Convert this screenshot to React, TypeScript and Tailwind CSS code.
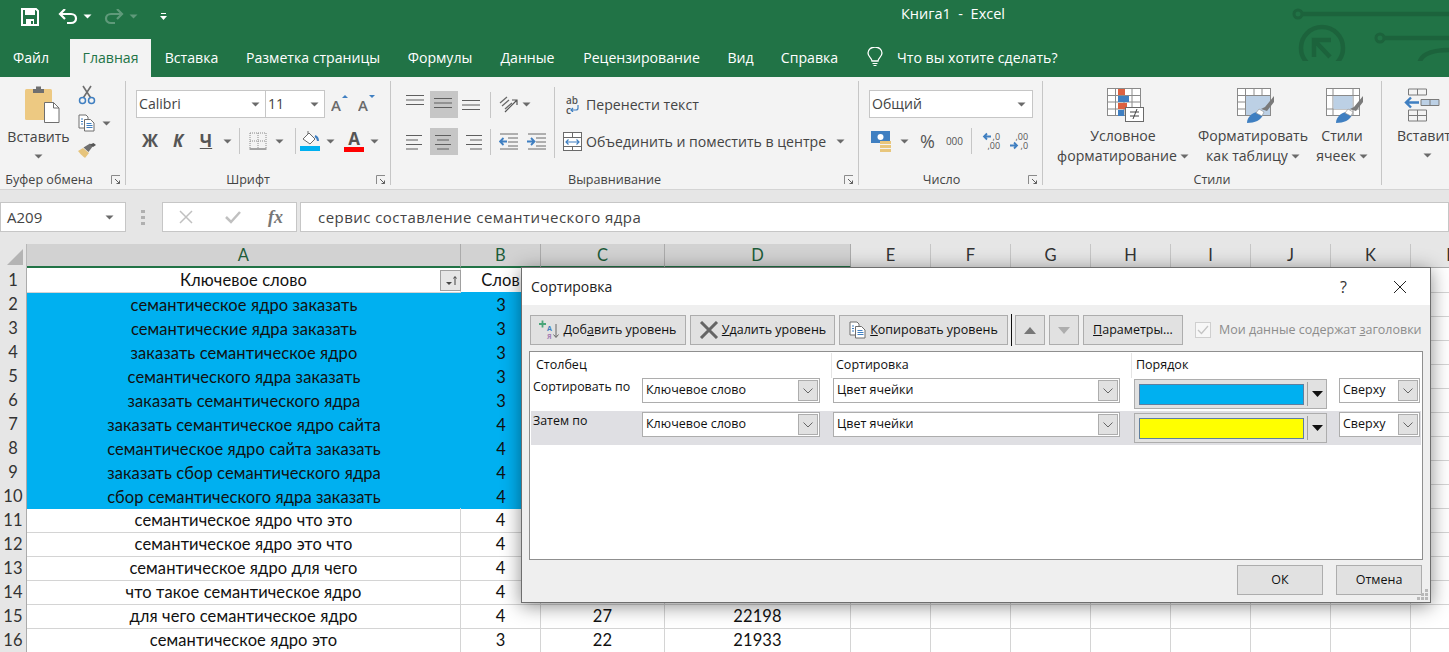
import type { ReactNode } from "react";

const Caret = ({ color = "#6a6a6a" }: { color?: string }) => (
  <svg width="9" height="5" viewBox="0 0 9 5" className="shrink-0">
    <path d="M0.5 0.5h8L4.5 4.5z" fill={color} />
  </svg>
);

const Launcher = () => (
  <svg width="10" height="10" viewBox="0 0 10 10" fill="none">
    <path d="M0.5 9V0.5H9" stroke="#8a8a8a" />
    <path d="M4 4l4.5 4.5M8.5 5.5v3h-3" stroke="#5f5f5f" />
  </svg>
);

const Group = ({
  label,
  launcher,
  className,
  labelClass,
  children,
}: {
  label: string;
  launcher?: boolean;
  className: string;
  labelClass?: string;
  children: ReactNode;
}) => (
  <div className={`h-[104px] shrink-0 flex flex-col border-r border-r-[#c6c6c6] ${className}`}>
    <div className="h-[91px] shrink-0">{children}</div>
    <div className={`relative h-[16px] shrink-0 text-center text-[12.6px] leading-[16px] text-[#444] ${labelClass ?? ""}`}>
      {label}
      {launcher && (
        <span className="absolute right-[4px] top-[3px]">
          <Launcher />
        </span>
      )}
    </div>
  </div>
);

const Lines = ({ rows }: { rows: [number, number][] }) => (
  <svg width="20" height="20" viewBox="0 0 20 20">
    {rows.map(([x, w], i) => (
      <rect key={i} x={x} y={3 + i * 4.5} width={w} height="1" fill="#5f5f5f" />
    ))}
  </svg>
);

const Vsep = () => <div className="w-px h-[26px] bg-[#c6c6c6] shrink-0" />;

const Scissors = () => (
  <svg width="18" height="20" viewBox="0 0 18 20" fill="none">
    <path d="M5.5 12.5L13 1M12.5 12.5L5 1" stroke="#6e6e6e" strokeWidth="1.6" />
    <circle cx="4.5" cy="15.5" r="3" stroke="#3f7fc1" strokeWidth="1.5" />
    <circle cx="13.5" cy="15.5" r="3" stroke="#3f7fc1" strokeWidth="1.5" />
  </svg>
);

const CopyIcon = ({ size = 18 }: { size?: number }) => (
  <svg width={size} height={size} viewBox="0 0 18 18" fill="none">
    <path d="M1 1h7l2 2v11H1z" fill="#fff" stroke="#6e6e6e" />
    <path d="M6.5 5.5h6l3.5 3.5v8H6.5z" fill="#fff" stroke="#6e6e6e" />
    <path d="M8.5 9.5h5M8.5 11.5h6M8.5 13.5h6M3 5h2M3 7.5h2M3 10h2" stroke="#3f7fc1" />
  </svg>
);

const Brush = () => (
  <svg width="18" height="16" viewBox="0 0 18 16">
    <path d="M0 8l5-3 6 5-4 5C5 13 3 12 0 8z" fill="#e6c47c" />
    <path d="M5.5 4.5L12 0.5l3 2.5-4.5 6z" fill="#6f6f6f" />
    <path d="M12 1.5L15.5 0 18 2l-3 2z" fill="#555" />
  </svg>
);

const Paste = () => (
  <svg width="35" height="38" viewBox="0 0 35 38">
    <rect x="0" y="4" width="27" height="31" rx="1.5" fill="#edc982" />
    <path d="M8 4h3V1.5h5V4h3v4H8z" fill="#6f6f6f" />
    <path d="M19.5 17.5h9l5.5 5.5v14.5H19.5z" fill="#fff" stroke="#6f6f6f" />
    <path d="M28.5 17.5V23H34" fill="none" stroke="#6f6f6f" />
  </svg>
);

const GrowFont = ({ up }: { up: boolean }) => (
  <svg width="20" height="20" viewBox="0 0 20 20">
    <text x="0" y="17" fontSize="15" fontWeight="600" fill="#6a6a6a" fontFamily="Open Sans">
      A
    </text>
    <path d={up ? "M11 4l3-3 3 3z" : "M11 1h6l-3 3z"} fill="#3f7fc1" />
  </svg>
);

const BordersIcon = () => (
  <svg width="18" height="18" viewBox="0 0 18 18" fill="none">
    <path d="M1 1h16M1 1v16M17 1v16M9 1v16M1 9h16" stroke="#8a8a8a" strokeDasharray="1 1" />
    <path d="M0.5 17h17" stroke="#555" />
  </svg>
);

const FillIcon = () => (
  <svg width="20" height="20" viewBox="0 0 20 20" fill="none">
    <path d="M3 8l6-6 6 6-5 5z" fill="#fff" stroke="#6a6a6a" />
    <path d="M8 3V0" stroke="#6a6a6a" />
    <path d="M15 5c2 1 3 3 3 5" stroke="#3f7fc1" strokeWidth="2" />
    <rect x="0" y="15" width="20" height="5" fill="#00b0f0" />
  </svg>
);

const WrapIcon = () => (
  <svg width="17" height="17" viewBox="0 0 17 17" fill="none">
    <path d="M15 10v3c0 1.500-1 2-2 2H8M10 13l-2 2 2 2" stroke="#3f7fc1" strokeWidth="1.2" />
  </svg>
);

const MergeIcon = () => (
  <svg width="20" height="20" viewBox="0 0 20 20" fill="none">
    <rect x="0.5" y="0.5" width="18" height="18" fill="#fff" stroke="#6a6a6a" />
    <path d="M0.5 5.5h18M0.5 14.5h18M9.5 0.5v5M9.5 14.5v4" stroke="#6a6a6a" />
    <path d="M3 10h13M5.5 7.5L3 10l2.5 2.5M13.5 7.5L16 10l-2.5 2.5" stroke="#3f7fc1" strokeWidth="1.2" />
  </svg>
);

const OrientIcon = () => (
  <svg width="20" height="20" viewBox="0 0 20 20" fill="none">
    <path d="M1 8l7-6M3 11l7-6M6 14l7-6" stroke="#6a6a6a" strokeWidth="1.3" />
    <path d="M6 17L18 5M13 5h5v5" stroke="#555" strokeWidth="1.2" />
  </svg>
);

const IndentIcon = ({ flip }: { flip?: boolean }) => (
  <svg width="19" height="17" viewBox="0 0 19 17" fill="none">
    <path d="M1 1h18M9 5h10M9 9h10M9 13h10M1 16h18" stroke="#6a6a6a" />
    <path
      d={flip ? "M0 8.5h7M4 5l3.5 3.5L4 12" : "M8 8.5H1M4.5 5L1 8.5 4.5 12"}
      stroke="#3f7fc1"
      strokeWidth="1.8"
    />
  </svg>
);

const CurrencyIcon = () => (
  <svg width="21" height="21" viewBox="0 0 21 21">
    <rect x="0" y="0" width="19" height="12" fill="#3f7fc1" />
    <circle cx="9.5" cy="6" r="3" fill="#fff" />
    <rect x="9" y="10" width="11" height="3" fill="#e8c67c" />
    <rect x="9" y="14" width="11" height="3" fill="#e8c67c" />
    <rect x="9" y="18" width="11" height="3" fill="#e8c67c" />
  </svg>
);

const DecimalIcon = ({ more }: { more?: boolean }) => (
  <div className="relative w-[18px] h-[18px] text-[9px] leading-[9px] text-[#555] text-right">
    <div>{more ? ",00" : ",0"}</div>
    <div>{more ? ",0" : ",00"}</div>
    <svg width="9" height="9" viewBox="0 0 9 9" fill="none" className={`absolute left-0 ${more ? "top-[9px]" : "top-0"}`}>
      <path
        d={more ? "M0 4.5h7M4 1.5l3 3-3 3" : "M9 4.5H2M5 1.5l-3 3 3 3"}
        stroke="#3f7fc1"
        strokeWidth="1.8"
      />
    </svg>
  </div>
);

const TableBase = () => (
  <g fill="#fff" stroke="#8a8a8a">
    <rect x="0.5" y="0.5" width="33" height="27" />
    <path d="M0.5 7.5h33M0.5 14h33M0.5 21h33M8.5 0.5v27M17 0.5v27M25 0.5v27" fill="none" />
  </g>
);

const CondFormatIcon = () => (
  <svg width="38" height="34" viewBox="0 0 38 34">
    <TableBase />
    <rect x="11" y="1" width="7" height="6" fill="#dc6141" />
    <rect x="11" y="8" width="11" height="6" fill="#3f7fc1" />
    <rect x="11" y="15" width="9" height="6" fill="#dc6141" />
    <rect x="11" y="22" width="6" height="6" fill="#3f7fc1" />
    <rect x="18.5" y="19.5" width="18" height="14" fill="#fff" stroke="#6a6a6a" />
    <path d="M23 24h9M23 28h9M26 31l4-10" stroke="#444" fill="none" />
  </svg>
);

const BrushOver = () => (
  <g>
    <path d="M10 35c0-6 5-10 10-11l6 3c-2 5-8 8-16 8z" fill="#3f7fc1" />
    <path d="M19 25l3-4 5 3-2 4z" fill="#fff" stroke="#8a8a8a" strokeWidth="0.6" />
    <path d="M24 21l4-2 9-11v6l-7 9z" fill="#7a7a7a" />
  </g>
);

const TableStyleIcon = () => (
  <svg width="38" height="35" viewBox="0 0 38 35">
    <TableBase />
    <rect x="9" y="8" width="24" height="19" fill="#bcd0e5" />
    <BrushOver />
  </svg>
);

const CellStyleIcon = () => (
  <svg width="38" height="35" viewBox="0 0 38 35">
    <rect x="0.5" y="0.5" width="33" height="27" fill="#fff" stroke="#8a8a8a" />
    <path d="M0.5 7.5h33M0.5 21h33M7 0.5v27M27 0.5v27" stroke="#8a8a8a" fill="none" />
    <rect x="7.5" y="8" width="19" height="13" fill="#bcd0e5" />
    <BrushOver />
  </svg>
);

const InsertCellsIcon = () => (
  <svg width="36" height="34" viewBox="0 0 36 34" fill="none">
    <path d="M4.5 1h18v6h-18zM13.5 1v6M4.5 22h18v11h-18zM13.5 22v11M4.5 27.500h18" stroke="#7a7a7a" />
    <path d="M17 11.5h18v6H17zM26 11.5v6" stroke="#7a7a7a" fill="#bcd0e5" />
    <path d="M15 14.5H2M7 9.5l-5 5 5 5" stroke="#3f7fc1" strokeWidth="2.4" />
  </svg>
);

const Circuit = () => (
  <svg width="170" height="61" viewBox="0 0 170 61" fill="none" stroke="#1c633c" className="absolute right-0 top-0">
    <circle cx="19" cy="14" r="4" strokeWidth="3" />
    <path d="M23 14h147" strokeWidth="4.5" />
    <circle cx="43" cy="48" r="21" strokeWidth="4.5" />
    <path d="M35 57V40h17M35 40l16 17" strokeWidth="4.5" />
    <circle cx="101" cy="38" r="4" strokeWidth="3" />
    <path d="M105 38h65" strokeWidth="4.5" />
    <path d="M140 66c0-10 10-16 30-16" strokeWidth="4.5" />
  </svg>
);

const tabs = [
  { name: "Вставка", w: "w-[81px]" },
  { name: "Разметка страницы", w: "w-[162px]" },
  { name: "Формулы", w: "w-[92px]" },
  { name: "Данные", w: "w-[83px]" },
  { name: "Рецензирование", w: "w-[145px]" },
  { name: "Вид", w: "w-[53px]" },
  { name: "Справка", w: "w-[85px]" },
];

const TitleBar = () => (
  <div className="relative bg-[#217346] text-white">
    <Circuit />
    <div className="relative h-[39px] flex items-center">
      <svg width="18" height="18" viewBox="0 0 18 18" className="ml-[21px] mb-[6px]">
        <path d="M1 1h14l2 2v14H1z" fill="none" stroke="#fff" strokeWidth="2" />
        <rect x="4" y="1" width="10" height="6" fill="#fff" />
        <rect x="5" y="11" width="8" height="6" fill="#fff" />
        <rect x="10" y="13" width="2" height="3" fill="#217346" />
      </svg>
      <svg width="20" height="16" viewBox="0 0 20 16" fill="none" className="ml-[19px] mb-[6px]">
        <path d="M2 5h11c3 0 5 2 5 4.500s-2 4.500-5 4.500H9" stroke="#fff" strokeWidth="2.2" />
        <path d="M7 0L2 5l5 5" stroke="#fff" strokeWidth="2.2" />
      </svg>
      <span className="ml-[5px] mb-[6px]">
        <Caret color="#fff" />
      </span>
      <svg width="20" height="16" viewBox="0 0 20 16" fill="none" className="ml-[12px] mb-[6px]">
        <path d="M18 5H7C4 5 2 7 2 9.500S4 14 7 14h4" stroke="#5f9a7a" strokeWidth="2.200" />
        <path d="M13 0l5 5-5 5" stroke="#5f9a7a" strokeWidth="2.200" />
      </svg>
      <span className="ml-[5px] mb-[6px]">
        <Caret color="#5f9a7a" />
      </span>
      <svg width="7" height="8" viewBox="0 0 7 8" className="ml-[22px] mb-[6px]">
        <path d="M1 0h5v1H1zM0 3h7L3.500 7z" fill="#fff" />
      </svg>
      <div className="ml-[734px] mb-[11px] text-[14.5px] whitespace-pre">Книга1  -  Excel</div>
    </div>
    <div className="relative h-[38px] flex text-[14.1px] leading-[37px]">
      <div className="w-[62px] text-center">Файл</div>
      <div className="w-[81px] ml-[8px] text-center bg-[#f3f3f3] text-[#217346]">Главная</div>
      {tabs.map((t) => (
        <div key={t.name} className={`${t.w} text-center`}>
          {t.name}
        </div>
      ))}
      <svg width="16" height="20" viewBox="0 0 16 20" fill="none" className="ml-[15px] mt-[8px]">
        <path d="M5 14c0-3-4-4-4-8a7 6 0 0 1 14 0c0 4-4 5-4 8z" stroke="#fff" strokeWidth="1.3" />
        <path d="M5.500 16.500h5M6.500 18.500h3" stroke="#fff" strokeWidth="1.200" />
      </svg>
      <div className="ml-[14px]">Что вы хотите сделать?</div>
    </div>
  </div>
);

const Ribbon = () => (
  <div className="h-[113px] flex pt-[4px] bg-[#f3f3f3] border-b border-b-[#d4d4d4] text-[14.1px] text-[#444] overflow-hidden">
    <Group label="Буфер обмена" launcher className="w-[126px]" labelClass="pr-[27px]">
      <div className="flex">
        <div className="w-[77px] flex flex-col items-center pt-[4px]">
          <div className="ml-[7px]">
            <Paste />
          </div>
          <div className="mt-[4px] leading-[20px]">Вставить</div>
          <div className="mt-[7px]">
            <Caret />
          </div>
        </div>
        <div className="flex flex-col">
          <div className="h-[28px] w-[20px] flex items-center justify-center">
            <Scissors />
          </div>
          <div className="h-[28px] flex items-center">
            <div className="w-[20px] flex justify-center">
              <CopyIcon />
            </div>
            <span className="ml-[5px]">
              <Caret />
            </span>
          </div>
          <div className="h-[28px] w-[20px] flex items-center justify-center">
            <Brush />
          </div>
        </div>
      </div>
    </Group>

    <Group label="Шрифт" launcher className="w-[265px]" labelClass="pr-[20px]">
      <div className="pl-[10px] pt-[9px]">
        <div className="flex items-center h-[28px]">
          <div className="w-[130px] h-full flex items-center justify-between px-[2px] pr-[5px] bg-white border border-[#c6c6c6]">
            Calibri
            <Caret />
          </div>
          <div className="w-[60px] h-full -ml-px flex items-center justify-between px-[2px] pr-[5px] bg-white border border-[#c6c6c6]">
            11
            <Caret />
          </div>
          <div className="ml-[6px]">
            <GrowFont up />
          </div>
          <div className="ml-[7px]">
            <GrowFont up={false} />
          </div>
        </div>
        <div className="flex items-center h-[28px] mt-[9px] text-[#555]">
          <div className="w-[28px] text-center text-[17px] font-bold">Ж</div>
          <div className="w-[28px] text-center text-[17px] font-bold italic">К</div>
          <div className="w-[28px] text-center text-[17px] font-bold underline">Ч</div>
          <div className="w-[15px] flex justify-center">
            <Caret />
          </div>
          <div className="ml-[4px]">
            <Vsep />
          </div>
          <div className="ml-[9px]">
            <BordersIcon />
          </div>
          <div className="ml-[8px]">
            <Caret />
          </div>
          <div className="ml-[11px]">
            <Vsep />
          </div>
          <div className="ml-[4px]">
            <FillIcon />
          </div>
          <div className="ml-[6px]">
            <Caret />
          </div>
          <div className="ml-[9px] w-[20px] flex flex-col items-center">
            <span className="text-[17px] font-bold leading-[17px]">A</span>
            <span className="w-[20px] h-[5px] bg-[#ff0000]" />
          </div>
          <div className="ml-[6px]">
            <Caret />
          </div>
        </div>
      </div>
    </Group>

    <Group label="Выравнивание" launcher className="w-[468px]" labelClass="pr-[20px]">
      <div className="flex pl-[11px] pt-[6px]">
        <div className="w-[152px] pt-[4px]">
          <div className="flex items-center h-[27px]">
            <div className="w-[28px] flex justify-center -mt-[5px]">
              <Lines rows={[[0, 18], [0, 18], [0, 18]]} />
            </div>
            <div className="w-[28px] h-full flex items-center justify-center bg-[#c6c6c6]">
              <Lines rows={[[0, 18], [0, 18], [0, 18]]} />
            </div>
            <div className="w-[28px] flex justify-center mt-[5px]">
              <Lines rows={[[0, 18], [0, 18], [0, 18]]} />
            </div>
            <div className="ml-[4px]">
              <Vsep />
            </div>
            <div className="ml-[8px]">
              <OrientIcon />
            </div>
            <div className="ml-[3px]">
              <Caret />
            </div>
          </div>
          <div className="flex items-center h-[27px] mt-[10px]">
            <div className="w-[28px] flex justify-center">
              <Lines rows={[[0, 16], [0, 12], [0, 16], [0, 12]]} />
            </div>
            <div className="w-[28px] h-full flex items-center justify-center bg-[#c6c6c6]">
              <Lines rows={[[1, 16], [3, 12], [1, 16], [3, 12]]} />
            </div>
            <div className="w-[28px] flex justify-center">
              <Lines rows={[[4, 16], [8, 12], [4, 16], [8, 12]]} />
            </div>
            <div className="ml-[4px]">
              <Vsep />
            </div>
            <div className="ml-[8px]">
              <IndentIcon />
            </div>
            <div className="ml-[9px]">
              <IndentIcon flip />
            </div>
          </div>
        </div>
        <div className="w-px h-[71px] bg-[#c6c6c6]" />
        <div className="pl-[8px] pt-[4px]">
          <div className="h-[27px] flex items-center">
            <div className="relative w-[20px] h-[20px] text-[10px] leading-[10px] font-semibold text-[#555] pl-[3px]">
              <div>ab</div>
              <div>c</div>
              <span className="absolute left-0 top-0">
                <WrapIcon />
              </span>
            </div>
            <span className="ml-[3px]">Перенести текст</span>
          </div>
          <div className="h-[27px] mt-[10px] flex items-center">
            <MergeIcon />
            <span className="ml-[3px]">Объединить и поместить в центре</span>
            <span className="ml-[10px]">
              <Caret />
            </span>
          </div>
        </div>
      </div>
    </Group>

    <Group label="Число" launcher className="w-[184px]" labelClass="pr-[18px]">
      <div className="pl-[10px] pt-[9px]">
        <div className="w-[164px] h-[28px] flex items-center justify-between pl-[2px] pr-[6px] bg-white border border-[#c6c6c6]">
          Общий
          <Caret />
        </div>
        <div className="flex items-center h-[28px] mt-[9px]">
          <div className="ml-[2px]">
            <CurrencyIcon />
          </div>
          <div className="ml-[8px]">
            <Caret />
          </div>
          <div className="ml-[11px] text-[18px] text-[#555]">%</div>
          <div className="ml-[11px] text-[10px] text-[#555]">000</div>
          <div className="ml-[8px]">
            <Vsep />
          </div>
          <div className="ml-[10px]">
            <DecimalIcon />
          </div>
          <div className="ml-[10px]">
            <DecimalIcon more />
          </div>
        </div>
      </div>
    </Group>

    <Group label="Стили" className="w-[339px]">
      <div className="flex pt-[7px] leading-[20px]">
        <div className="w-[160px] flex flex-col items-center whitespace-nowrap">
          <div className="h-[38px] ml-[6px]">
            <CondFormatIcon />
          </div>
          <div>Условное</div>
          <div className="flex items-center gap-[3px]">
            форматирование
            <Caret />
          </div>
        </div>
        <div className="w-[100px] flex flex-col items-center whitespace-nowrap">
          <div className="h-[38px] ml-[6px]">
            <TableStyleIcon />
          </div>
          <div>Форматировать</div>
          <div className="flex items-center gap-[3px]">
            как таблицу
            <Caret />
          </div>
        </div>
        <div className="w-[78px] flex flex-col items-center whitespace-nowrap">
          <div className="h-[38px] ml-[6px]">
            <CellStyleIcon />
          </div>
          <div>Стили</div>
          <div className="flex items-center gap-[3px]">
            ячеек
            <Caret />
          </div>
        </div>
      </div>
    </Group>

    <div className="flex flex-col pl-[15px] pt-[7px] leading-[20px] whitespace-nowrap">
      <div className="h-[38px] w-[50px] flex justify-center">
        <InsertCellsIcon />
      </div>
      <div>Вставить</div>
      <div className="w-[60px] flex justify-center mt-[7px]">
        <Caret />
      </div>
    </div>
  </div>
);

const FormulaBar = () => (
  <div className="h-[54px] pt-[12px] flex bg-[#e6e6e6] text-[#444]">
    <div className="w-[126px] h-[30px] flex items-center justify-between pl-[6px] pr-[11px] bg-white border border-[#c6c6c6] text-[15px]">
      A209
      <Caret />
    </div>
    <div className="ml-[15px] mt-[8px] flex flex-col gap-[3px]">
      <span className="w-[4px] h-[3px] bg-[#b0b0b0]" />
      <span className="w-[4px] h-[3px] bg-[#b0b0b0]" />
      <span className="w-[4px] h-[3px] bg-[#b0b0b0]" />
    </div>
    <div className="w-[135px] h-[30px] ml-[17px] flex items-center bg-white border border-[#c6c6c6]">
      <svg width="14" height="14" viewBox="0 0 14 14" className="ml-[16px]" fill="none">
        <path d="M1 1l12 12M13 1L1 13" stroke="#c0c0c0" strokeWidth="1.500" />
      </svg>
      <svg width="16" height="14" viewBox="0 0 16 14" className="ml-[32px]" fill="none">
        <path d="M1 7l5 5L15 2" stroke="#c0c0c0" strokeWidth="2.500" />
      </svg>
      <span className="ml-[27px] text-[18px] leading-none font-bold italic text-[#777] [font-family:'Liberation_Serif',serif]">
        fx
      </span>
    </div>
    <div className="flex-1 h-[30px] ml-[3px] pl-[17px] flex items-center bg-white border border-[#c6c6c6] text-[15px] tracking-[0.45px]">
      сервис составление семантического ядра
    </div>
  </div>
);

const columns = ["A", "B", "C", "D", "E", "F", "G", "H", "I", "J", "K", "L"];
const active = ["A", "B", "C", "D"];
const gridCols = "grid grid-cols-[27px_434px_80px_124px_186px_80px_80px_80px_80px_80px_80px_80px_80px]";

const rows = [
  { a: "семантическое ядро заказать", b: "3" },
  { a: "семантические ядра заказать", b: "3" },
  { a: "заказать семантическое ядро", b: "3" },
  { a: "семантического ядра заказать", b: "3" },
  { a: "заказать семантического ядра", b: "3" },
  { a: "заказать семантическое ядро сайта", b: "4" },
  { a: "семантическое ядро сайта заказать", b: "4" },
  { a: "заказать сбор семантического ядра", b: "4" },
  { a: "сбор семантического ядра заказать", b: "4" },
  { a: "семантическое ядро что это", b: "4" },
  { a: "семантическое ядро это что", b: "4" },
  { a: "семантическое ядро для чего", b: "4" },
  { a: "что такое семантическое ядро", b: "4" },
  { a: "для чего семантическое ядро", b: "4", c: "27", d: "22198" },
  { a: "семантическое ядро это", b: "3", c: "22", d: "21933" },
];

const RowHead = ({ n }: { n: number }) => (
  <div className="text-center pt-px leading-[23px] bg-[#e6e6e6] text-[#333] border-r border-r-[#ababab] border-b border-b-[#b8b8b8]">
    {n}
  </div>
);

const Cell = ({ fill, children }: { fill?: boolean; children?: ReactNode }) => (
  <div
    className={
      fill
        ? "text-center pt-px leading-[24px] bg-[#00b0f0]"
        : "text-center pt-px leading-[22px] border-r border-b border-[#d4d4d4]"
    }
  >
    {children}
  </div>
);

const Sheet = () => (
  <div className="[font-family:Lato,sans-serif] text-[16.5px] tracking-[0.1px] text-[#111] w-[1491px]">
    <div className={`${gridCols} h-[24px] bg-[#e6e6e6] text-[#333]`}>
      <div className="relative border-r border-r-[#b8b8b8] bg-[#e6e6e6]">
        <svg width="16" height="16" viewBox="0 0 16 16" className="absolute right-[3px] bottom-[3px]">
          <path d="M16 0v16H0z" fill="#b4b4b4" />
        </svg>
      </div>
      {columns.map((c) => (
        <div
          key={c}
          className={
            active.includes(c)
              ? "text-center leading-[22px] bg-[#d2d2d2] text-[#1d5c39] border-r border-r-[#ababab] border-b-2 border-b-[#217346]"
              : "text-center leading-[23px] border-r border-r-[#c6c6c6] border-b border-b-[#ababab]"
          }
        >
          {c}
        </div>
      ))}
    </div>
    <div className={`${gridCols} h-[24px] bg-white`}>
      <RowHead n={1} />
      <div className="relative text-center pt-px leading-[22px] border-r border-b border-[#d4d4d4]">
        Ключевое слово
        <span className="absolute right-[-1px] top-[2px] w-[21px] h-[21px] flex items-center justify-center gap-px bg-[#e6e6e6] border border-[#a0a0a0]">
          <svg width="14" height="12" viewBox="0 0 14 12" fill="none">
            <path d="M2 7h6l-3 3z" fill="#444" />
            <path d="M11 10V2M9.500 3.500L11 1.500l1.500 2" stroke="#444" />
          </svg>
        </span>
      </div>
      <Cell>Слов</Cell>
      <Cell />
      <Cell />
      <Cell />
      <Cell />
      <Cell />
      <Cell />
      <Cell />
      <Cell />
      <Cell />
      <Cell />
    </div>
    {rows.map((r, i) => (
      <div key={i} className={`${gridCols} h-[24px] bg-white`}>
        <RowHead n={i + 2} />
        <Cell fill={i < 9}>{r.a}</Cell>
        <Cell fill={i < 9}>{r.b}</Cell>
        <Cell fill={i < 9}>{r.c}</Cell>
        <Cell fill={i < 9}>{r.d}</Cell>
        <Cell />
        <Cell />
        <Cell />
        <Cell />
        <Cell />
        <Cell />
        <Cell />
        <Cell />
      </div>
    ))}
  </div>
);

const Btn = ({ className, children }: { className: string; children: ReactNode }) => (
  <div className={`h-[30px] flex items-center justify-center bg-[#e1e1e1] border border-[#adadad] shrink-0 ${className}`}>
    {children}
  </div>
);

const ComboArrow = () => (
  <span className="w-[20px] h-[21px] mr-px flex items-center justify-center bg-[#e1e1e1] border border-[#adadad]">
    <svg width="10" height="6" viewBox="0 0 10 6" fill="none">
      <path d="M0.500 0.500L5 5l4.500-4.500" stroke="#666" />
    </svg>
  </span>
);

const Combo = ({ className, text }: { className: string; text: string }) => (
  <div className={`h-[25px] flex items-center justify-between pl-[3px] bg-white border border-[#adadad] shrink-0 ${className}`}>
    {text}
    <ComboArrow />
  </div>
);

const ColorCombo = ({ color }: { color: string }) => (
  <div className="w-[193px] h-[30px] flex items-center pl-[4px] bg-[#e1e1e1] border border-[#adadad] shrink-0">
    <span className="w-[165px] h-[21px] border border-[#5f7f9f]" style={{ backgroundColor: color }} />
    <span className="w-px h-[24px] ml-[3px] bg-[#a0a0a0]" />
    <svg width="11" height="6" viewBox="0 0 11 6" className="ml-[4px]">
      <path d="M0 0h11L5.500 6z" fill="#111" />
    </svg>
  </div>
);

const SortRow = ({
  label,
  color,
  className,
}: {
  label: string;
  color: string;
  className: string;
}) => (
  <div className={`flex items-start ${className}`}>
    <div className="w-[111px] pl-[2px] leading-[18px] text-[12.400px]">{label}</div>
    <Combo className="w-[178px]" text="Ключевое слово" />
    <Combo className="w-[287px] ml-[13px]" text="Цвет ячейки" />
    <div className="ml-[14px] mt-px">
      <ColorCombo color={color} />
    </div>
    <Combo className="w-[81px] ml-[12px]" text="Сверху" />
  </div>
);

const SortDialog = () => (
  <div className="absolute left-[521px] top-[267px] w-[910px] h-[336px] flex flex-col bg-[#efefef] border border-[#6e6e6e] shadow-[0_3px_18px_rgba(0,0,0,0.45)] text-[12.500px] text-[#111]">
    <div className="h-[37px] shrink-0 flex items-center bg-white">
      <div className="ml-[9px] text-[14px] text-[#222]">Сортировка</div>
      <div className="ml-auto text-[16px] text-[#333]">?</div>
      <svg width="14" height="14" viewBox="0 0 14 14" fill="none" className="ml-[46px] mr-[23px]">
        <path d="M1 1l12 12M13 1L1 13" stroke="#222" />
      </svg>
    </div>
    <div className="flex items-center h-[46px] shrink-0 pl-[8px] gap-[4px] pt-[4px]">
      <Btn className="w-[156px]">
        <svg width="22" height="20" viewBox="0 0 22 20" className="mr-[2px]">
          <path d="M0 4h7M3.500 0.500v7" stroke="#4aa57a" strokeWidth="1.800" />
          <text x="8" y="11" fontSize="7" fontWeight="700" fill="#3f7fc1" fontFamily="Open Sans">A</text>
          <text x="8" y="19" fontSize="7" fontWeight="700" fill="#a67fb5" fontFamily="Open Sans">Я</text>
          <path d="M17 4v13M14.500 14.500L17 17.500l2.500-3" stroke="#666" fill="none" />
        </svg>
        <span>
          Доб<u>а</u>вить уровень
        </span>
      </Btn>
      <Btn className="w-[145px]">
        <svg width="20" height="18" viewBox="0 0 20 18" fill="none" className="mr-[3px]">
          <path d="M2 1l16 16M18 1L2 17" stroke="#666" strokeWidth="3" />
        </svg>
        <span>
          <u>У</u>далить уровень
        </span>
      </Btn>
      <Btn className="w-[169px]">
        <span className="mr-[3px]">
          <CopyIcon />
        </span>
        <span>
          <u>К</u>опировать уровень
        </span>
      </Btn>
      <div className="w-px h-[32px] -ml-px bg-[#111] shrink-0" />
      <Btn className="w-[30px] -ml-px">
        <svg width="12" height="7" viewBox="0 0 12 7">
          <path d="M0 7h12L6 0z" fill="#777" />
        </svg>
      </Btn>
      <Btn className="w-[30px]">
        <svg width="12" height="7" viewBox="0 0 12 7">
          <path d="M0 0h12L6 7z" fill="#adadad" />
        </svg>
      </Btn>
      <Btn className="w-[100px]">
        <span>
          <u>П</u>араметры...
        </span>
      </Btn>
      <div className="w-[16px] h-[16px] ml-[8px] flex items-center justify-center bg-[#f7f7f7] border border-[#cfcfcf] shrink-0">
        <svg width="12" height="10" viewBox="0 0 12 10" fill="none">
          <path d="M1 5l3.500 3.500L11 1" stroke="#c4c4c4" strokeWidth="1.300" />
        </svg>
      </div>
      <div className="ml-[4px] text-[#8c8c8c] whitespace-nowrap">
        Мои данные содержат <u>з</u>аголовки
      </div>
    </div>
    <div className="w-[894px] h-[209px] ml-[7px] shrink-0 bg-white border border-[#8f8f8f] pt-px pl-px">
      <div className="flex h-[25px] leading-[24px]">
        <div className="w-[301px] pl-[5px] border-r border-r-[#e4e4e4]">Столбец</div>
        <div className="w-[300px] pl-[4px] border-r border-r-[#e4e4e4]">Сортировка</div>
        <div className="pl-[4px]">Порядок</div>
      </div>
      <SortRow label="Сортировать по" color="#00b0f0" className="h-[33px]" />
      <SortRow label="Затем по" color="#ffff00" className="h-[34px] pt-px bg-[#dfdfe3] w-[890px]" />
    </div>
    <div className="flex justify-end gap-[13px] mt-[5px] pr-[8px]">
      <Btn className="w-[86px] h-[28px]">ОК</Btn>
      <Btn className="w-[86px] h-[28px]">Отмена</Btn>
    </div>
    <svg width="12" height="12" viewBox="0 0 12 12" className="absolute right-[1px] bottom-[1px]" fill="#b9b9b9">
      <path d="M8 0h3v3H8zM4 4h3v3H4zM8 4h3v3H8zM0 8h3v3H0zM4 8h3v3H4zM8 8h3v3H8z" />
    </svg>
  </div>
);

export default function App() {
  return (
    <div className="relative w-[1449px] h-[652px] overflow-hidden bg-white [font-family:'Open_Sans',sans-serif]">
      <TitleBar />
      <Ribbon />
      <FormulaBar />
      <Sheet />
      <SortDialog />
    </div>
  );
}
